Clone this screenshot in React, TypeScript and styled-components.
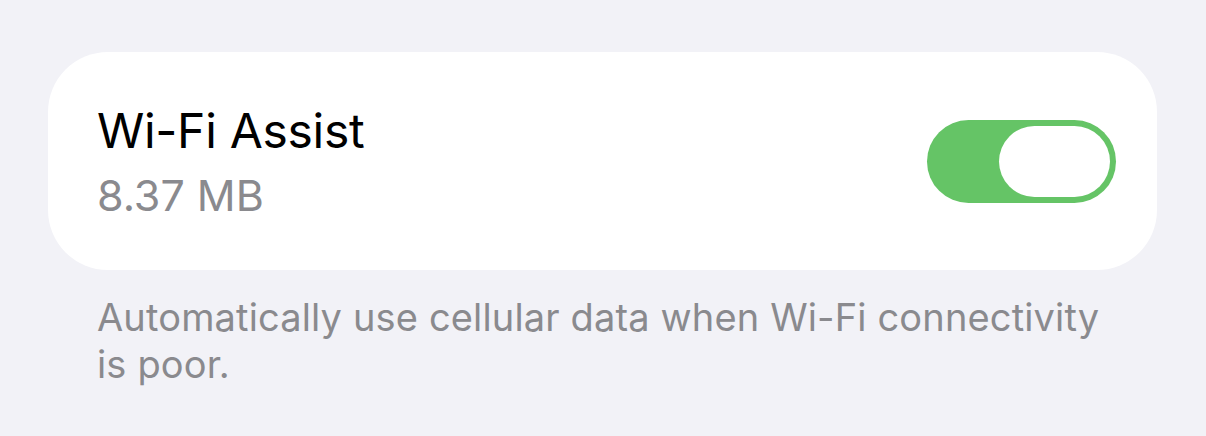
import React from "react";
import styled, { createGlobalStyle } from "styled-components";

const GlobalStyle = createGlobalStyle`
  html, body {
    margin: 0;
    padding: 0;
    background: #f2f2f7;
  }
  body {
    font-family: Inter, "Noto Sans", "Liberation Sans", sans-serif;
    -webkit-font-smoothing: antialiased;
  }
`;

const Page = styled.div`
  padding: 52px 49px 0 48px;
`;

const Card = styled.div`
  height: 218px;
  box-sizing: border-box;
  background: #ffffff;
  border-radius: 60px;
  padding: 0 41px 0 49px;
  display: flex;
  align-items: center;
  justify-content: space-between;
`;

const Labels = styled.div`
  display: flex;
  flex-direction: column;
  gap: 12px;
  margin-top: 2px;
`;

const Title = styled.div`
  font-size: 48px;
  line-height: 54px;
  color: #000000;
  letter-spacing: -0.3px;
`;

const Detail = styled.div`
  font-size: 43px;
  line-height: 50px;
  color: #8a8a8e;
`;

type SwitchProps = {
  on: boolean;
};

const Switch = styled.div<SwitchProps>`
  width: 189px;
  height: 83px;
  box-sizing: border-box;
  padding: 6px;
  border-radius: 42px;
  background: ${(props) => (props.on ? "#65c466" : "#e9e9eb")};
  display: flex;
  justify-content: ${(props) => (props.on ? "flex-end" : "flex-start")};
  margin-top: 1px;
`;

const Knob = styled.div`
  width: 111px;
  height: 71px;
  border-radius: 36px;
  background: #ffffff;
`;

const Footer = styled.p`
  margin: 24px 0 0 49px;
  font-size: 38px;
  line-height: 47px;
  letter-spacing: 0.15px;
  color: #8a8a8e;
  max-width: 1020px;
`;

export default function App() {
  return (
    <>
      <GlobalStyle />
      <Page>
        <Card>
          <Labels>
            <Title>Wi-Fi Assist</Title>
            <Detail>8.37 MB</Detail>
          </Labels>
          <Switch on={true}>
            <Knob />
          </Switch>
        </Card>
        <Footer>
          Automatically use cellular data when Wi-Fi connectivity is poor.
        </Footer>
      </Page>
    </>
  );
}
